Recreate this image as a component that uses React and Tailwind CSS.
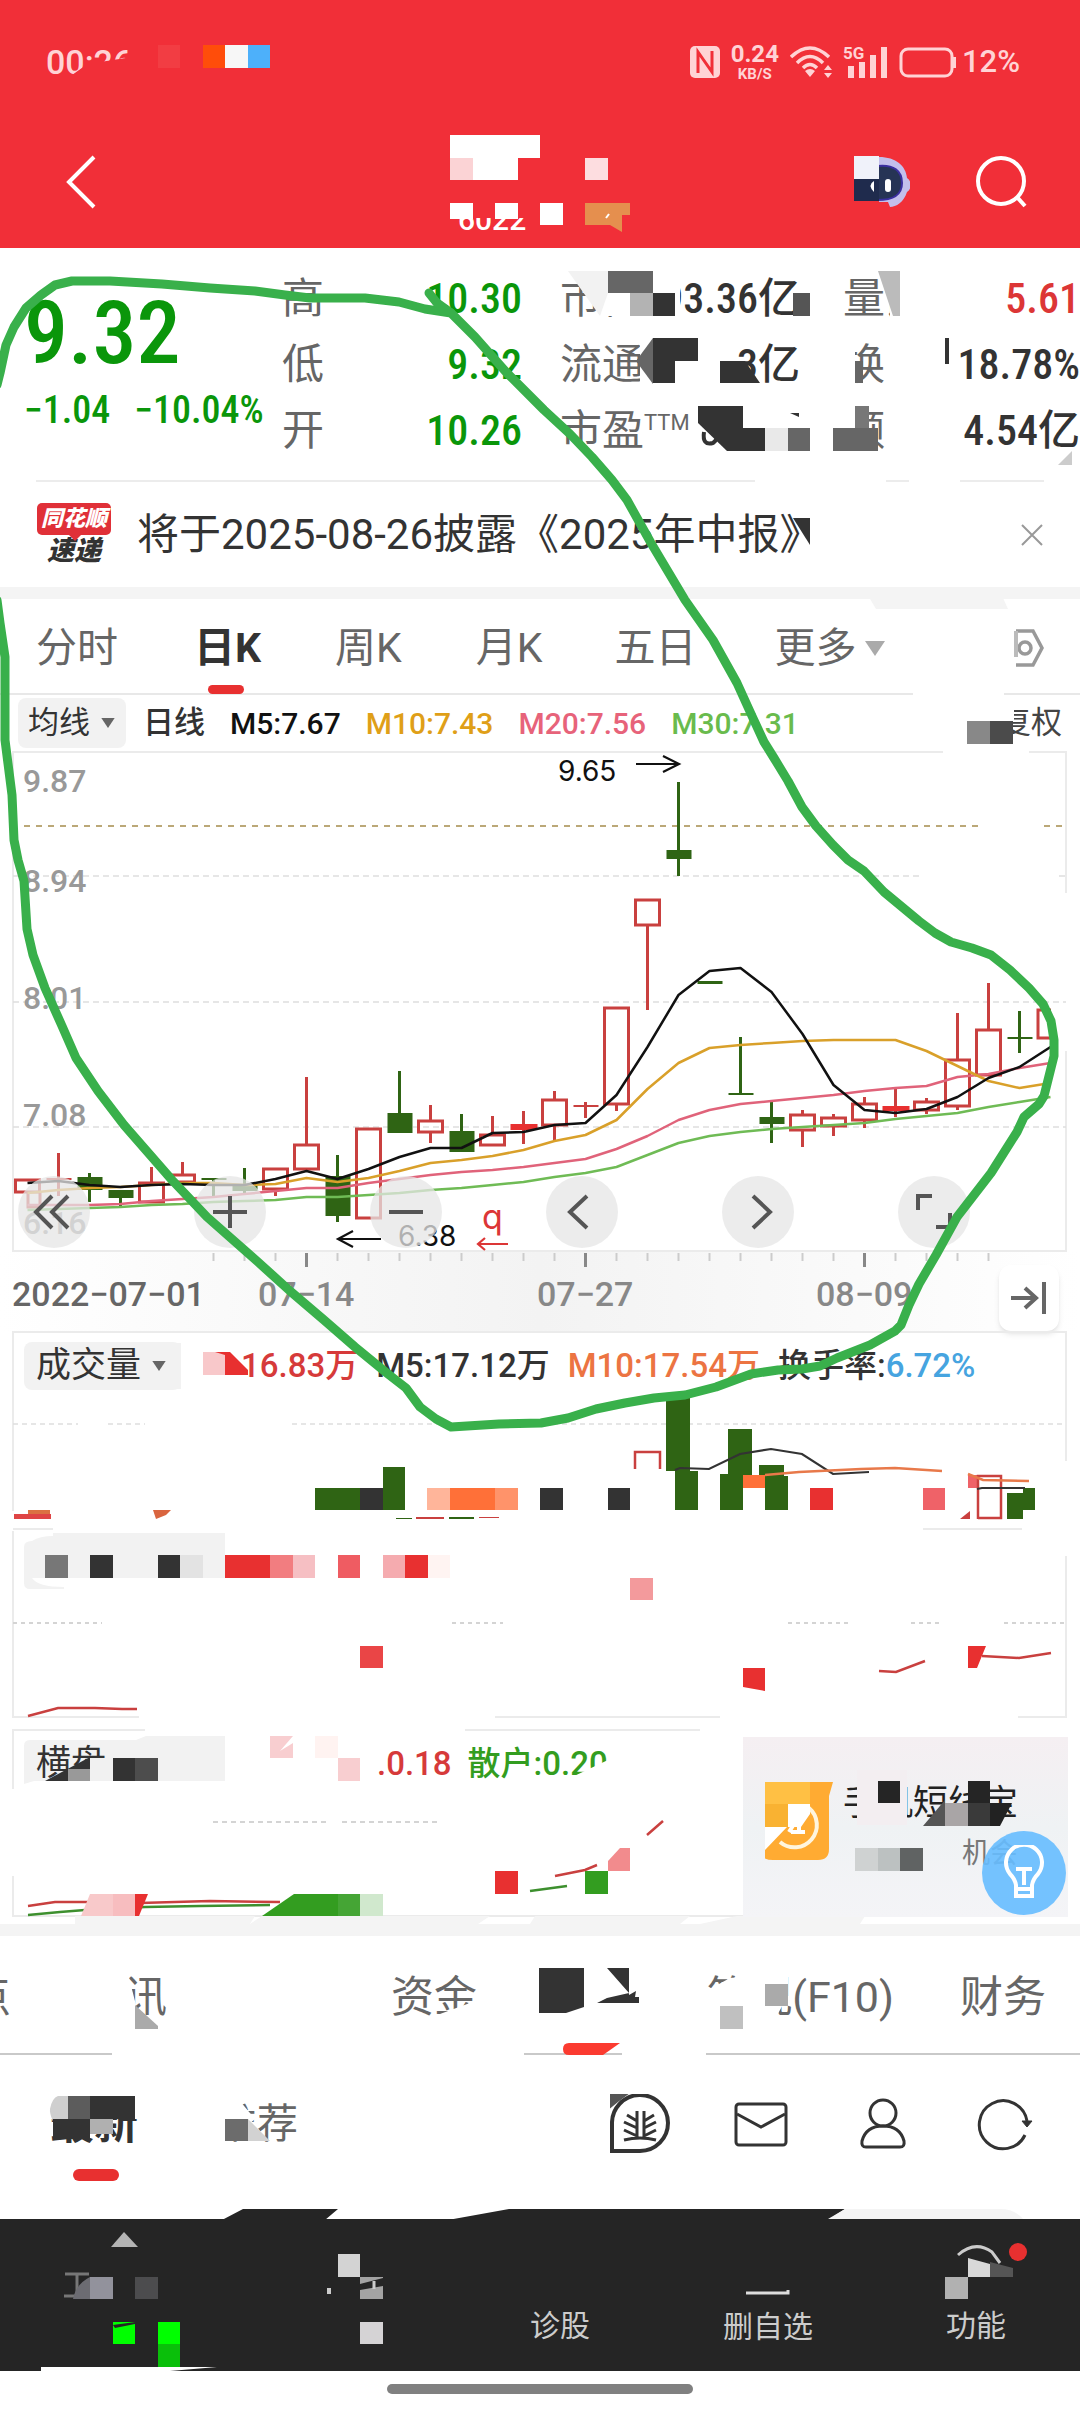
import React from "react";

const INK = "#333333";
const RED = "#e83030";
const CANDLE_RED = "#c9403f";
const CANDLE_GREEN = "#2f6414";

const slotX = (i) => 27.5 + 31 * i;
const plotY = (v) => Math.round(v * 1.074 + 1);

/* [slot, kind, body top, body bottom, wick top, wick bottom] */
const candles = [
  [0, "up", 398, 410, 398, 410],
  [1, "flatUp", 398, 398, 373, 413],
  [2, "down", 396, 408, 392, 419],
  [3, "down", 408, 415, 408, 425],
  [4, "up", 400, 419, 386, 419],
  [5, "up", 393, 400, 382, 400],
  [6, "flatDown", 398, 398, 398, 413],
  [7, "down", 404, 409, 387, 411],
  [8, "up", 387, 407, 387, 413],
  [9, "up", 365, 388, 303, 388],
  [10, "down", 395, 432, 375, 438],
  [11, "up", 350, 434, 350, 434],
  [12, "down", 336, 355, 297, 355],
  [13, "up", 343, 354, 329, 364],
  [14, "down", 353, 372, 337, 372],
  [15, "up", 356, 366, 339, 366],
  [16, "solidUp", 346, 352, 334, 365],
  [17, "up", 323, 347, 316, 362],
  [18, "flatUp", 330, 330, 326, 341],
  [19, "up", 237, 328, 237, 334],
  [20, "up", 137, 161, 137, 240],
  [21, "down", 91, 100, 28, 115],
  [22, "down", 213, 216, 213, 216],
  [23, "flatDown", 318, 318, 265, 318],
  [24, "down", 340, 346, 326, 364],
  [25, "up", 337, 352, 333, 368],
  [26, "up", 340, 348, 337, 358],
  [27, "up", 327, 343, 321, 350],
  [28, "solidUp", 330, 334, 313, 340],
  [29, "up", 325, 333, 322, 337],
  [30, "up", 286, 330, 243, 333],
  [31, "up", 258, 301, 215, 302],
  [32, "flatDown", 266, 266, 241, 280],
];

const averages = [
  { color: "#6fbb55", values: [426, 425.5, 425, 423.5, 422, 420.5, 419, 418, 417, 414, 414, 412.5, 410.5, 408, 406, 403, 400, 396, 392, 386, 375, 364, 358, 354, 351, 349, 347.5, 345, 342, 339, 336, 331, 326, 321] },
  { color: "#e0637a", values: [422, 421.5, 421.5, 421, 418, 416, 414, 412, 409, 406, 406, 401, 398, 394, 391, 389, 386, 383, 379, 370, 358, 343, 333, 328, 325, 322, 319, 316, 313, 311, 303, 300, 294, 290] },
  { color: "#d9a02a", values: [411, 408, 406, 405, 403, 401, 401.5, 403, 402, 397, 400, 397, 390, 383, 380, 376, 371, 362, 357, 343, 314, 290, 275.5, 273, 271, 269, 268, 268, 268, 278, 292, 306, 313, 308] },
  { color: "#111111", values: [401, 399, 403, 405, 403, 402, 403, 403, 398, 390, 398, 388, 377, 369, 369, 355, 354, 347, 345, 319, 275, 226, 204, 201, 223, 263, 310, 333, 336, 332, 321, 304, 293, 275] },
];

function Candle({ data }) {
  const [slot, kind, top, bottom, high, low] = data;
  const x = slotX(slot);
  const t = plotY(top);
  const b = plotY(bottom);
  const h = plotY(high);
  const l = plotY(low);
  const down = kind === "down" || kind === "flatDown";
  const color = down ? CANDLE_GREEN : CANDLE_RED;
  return (
    <g stroke={color} strokeWidth="3" fill="none">
      {h < t && <path d={`M${x} ${h}V${t}`} />}
      {l > b && <path d={`M${x} ${b}V${l}`} />}
      {kind === "up" && <rect x={x - 12} y={t + 1} width="24" height={b - t - 1} />}
      {kind === "down" && <rect x={x - 12} y={t} width="25" height={b - t} fill={color} stroke="none" />}
      {kind === "solidUp" && <rect x={x - 13} y={t} width="27" height={b - t} fill={RED} stroke="none" />}
      {(kind === "flatUp" || kind === "flatDown") && <path d={`M${x - 12} ${t}H${x + 13}`} strokeWidth="2" />}
    </g>
  );
}

function Caret({ className }) {
  return (
    <svg viewBox="0 0 16 12" className={className} aria-hidden="true">
      <path d="M0 0H16L8 12Z" fill="currentColor" />
    </svg>
  );
}

function StatusBar() {
  return (
    <div className="flex h-[124px] items-center justify-between pr-[60px] pl-[46px] text-[#ffd3d5]">
      <span className="text-[34px] font-medium [clip-path:polygon(0_0,100%_0,100%_40%,48%_54%,10%_100%,0_100%)]">00:26</span>
      <div className="flex items-center gap-[11px]">
        <svg viewBox="0 0 30 32" className="h-8 w-[30px]">
          <rect width="30" height="32" rx="5" fill="currentColor" />
          <path d="M8 27V6L22 26V5M8 6V27" fill="none" stroke="#f12f38" strokeWidth="3" />
        </svg>
        <div className="flex flex-col items-center font-bold">
          <span className="text-[24px] leading-[24px]">0.24</span>
          <span className="text-[15px] leading-[16px]">KB/S</span>
        </div>
        <svg viewBox="0 0 42 32" className="h-8 w-[42px]" fill="none" stroke="currentColor" strokeWidth="3.5">
          <path d="M1 11Q20 -7 39 11M7 17Q20 4 33 17M13 22Q20 15 27 22" />
          <path d="M15 25Q20 21 25 25L20 31ZM34 24L38 19L42 24ZM34 27L38 32L42 27Z" fill="currentColor" stroke="none" />
        </svg>
        <div className="relative">
          <svg viewBox="0 0 44 32" className="h-8 w-11" fill="currentColor">
            <path d="M5 20h6v12H5zM16 16h6v16h-6zM27 9h6v23h-6zM38 1h6v31h-6z" />
          </svg>
          <span className="absolute top-0 left-0 text-[17px] leading-[14px] font-bold">5G</span>
        </div>
        <div className="flex items-center gap-1.5">
          <svg viewBox="0 0 58 32" className="h-8 w-[58px]" fill="none" stroke="currentColor" strokeWidth="3">
            <rect x="3" y="3" width="51" height="27" rx="7" />
            <path d="M56 11V22" strokeWidth="4" />
          </svg>
          <span className="text-[31px] font-medium">12%</span>
        </div>
      </div>
    </div>
  );
}

function Header() {
  return (
    <header className="bg-[#f12f38] pb-2 text-white">
      <StatusBar />
      <div className="flex h-[116px] items-center justify-between pr-[52px] pl-[60px]">
        <button type="button" aria-label="返回">
          <svg viewBox="0 0 40 60" className="h-[60px] w-10" fill="none" stroke="white" strokeWidth="4">
            <path d="M34 5L9 30L34 55" />
          </svg>
        </button>
        <div className="flex items-center gap-[66px]">
          <button type="button" aria-label="智能助手">
            <svg viewBox="0 0 56 52" className="h-[52px] w-14">
              <path d="M25 1C42 1 52 10 53 22C58 25 58 33 53 36C50 46 42 51 36 51L34 46H25Z" fill="#c3bfec" />
              <path d="M23 10C40 8 48 15 48 27C48 39 40 44 23 44Z" fill="#263455" stroke="#3b2fa0" strokeWidth="2" />
              <rect width="25" height="23" fill="#f0f2fa" />
              <rect y="23" width="25" height="22" fill="#1f2b4d" />
              <rect x="31" y="23" width="6" height="13" rx="3" fill="white" />
              <path d="M20 25Q13 29 20 36Z" fill="white" />
            </svg>
          </button>
          <button type="button" aria-label="搜索">
            <svg viewBox="0 0 52 52" className="size-[52px]" fill="none" stroke="white" strokeWidth="4">
              <circle cx="25" cy="25" r="23" />
              <path d="M41 41L49 50" />
            </svg>
          </button>
        </div>
      </div>
    </header>
  );
}

function Stats({ className, rows, valueClass }) {
  return (
    <dl className={className}>
      {rows.map(([label, value, color, note]) => (
        <div key={label} className="flex h-[66px] items-center justify-between">
          <dt className="flex text-[42px] leading-[66px] whitespace-nowrap text-[#666]">
            {label}
            {note && <span className="text-[22px] leading-[50px]">{note}</span>}
          </dt>
          <dd className={valueClass + " " + color}>{value}</dd>
        </div>
      ))}
    </dl>
  );
}

function Quote() {
  const value = "text-[42px] leading-[66px] whitespace-nowrap font-medium font-['Liberation_Sans_Narrow','Roboto_Condensed',Roboto,'Noto_Sans_CJK_SC',sans-serif]";
  return (
    <section className="flex pt-[18px] pb-4">
      <div className="w-[282px] pt-[22px] pl-6 font-['Liberation_Sans_Narrow','Roboto_Condensed',Roboto,sans-serif] text-[#0a960a]">
        <p className="text-[88px] leading-[90px] font-medium">9.32</p>
        <p className="flex gap-6 pt-2.5 text-[38px] leading-[44px] font-medium whitespace-nowrap">
          <span>−1.04</span>
          <span>−10.04%</span>
        </p>
      </div>
      <Stats
        className="w-[240px]"
        valueClass={value}
        rows={[
          ["高", "10.30", "text-[#0a960a]"],
          ["低", "9.32", "text-[#0a960a]"],
          ["开", "10.26", "text-[#0a960a]"],
        ]}
      />
      <Stats
        className="ml-[38px] w-[240px]"
        valueClass={value}
        rows={[
          ["市值", "93.36亿", "text-[#333]"],
          ["流通", "93亿", "text-[#333]"],
          ["市盈", "", "text-[#333]", "TTM"],
        ]}
      />
      <Stats
        className="ml-[43px] flex-1"
        valueClass={value}
        rows={[
          ["量比", "5.61", "text-[#dc3636]"],
          ["换", "18.78%", "text-[#333]"],
          ["额", "4.54亿", "text-[#333]"],
        ]}
      />
    </section>
  );
}

function News() {
  return (
    <section className="mx-9 flex h-[107px] items-center border-t-2 border-[#ececec]">
      <div className="flex w-[76px] flex-col items-center italic">
        <span className="relative rounded-[5px] bg-[#e03038] px-1 text-[22px] leading-8 font-black whitespace-nowrap text-white">
          同花顺
          <svg viewBox="0 0 12 6" className="absolute top-full left-8 h-1.5 w-3"><path d="M0 0H12L6 6Z" fill="#e03038" /></svg>
        </span>
        <span className="text-[27px] leading-8 font-black text-[#333]">速递</span>
      </div>
      <a href="#report" className="ml-[25px] flex-1 text-[42px] whitespace-nowrap text-[#333]">将于2025-08-26披露《2025年中报》</a>
      <button type="button" aria-label="关闭">
        <svg viewBox="0 0 24 24" className="size-6" stroke="#999" strokeWidth="2"><path d="M2 2L22 22M22 2L2 22" /></svg>
      </button>
    </section>
  );
}

function PeriodTabs() {
  const tab = "text-[41px] leading-[60px] text-[#666] whitespace-nowrap";
  return (
    <nav className="flex h-24 items-center border-b-2 border-[#e8e8e8] px-9 pt-1">
      <button type="button" className={tab}>分时</button>
      <button type="button" className="relative ml-[76px] text-[41px] leading-[60px] font-bold text-[#333]">
        日K
        <span className="absolute -bottom-4 left-3.5 h-[9px] w-9 rounded-full bg-[#e83030]" />
      </button>
      <button type="button" className={tab + " ml-[74px]"}>周K</button>
      <button type="button" className={tab + " ml-[74px]"}>月K</button>
      <button type="button" className={tab + " ml-[72px]"}>五日</button>
      <button type="button" className={tab + " ml-[78px] flex items-center gap-2"}>
        更多
        <Caret className="h-[15px] w-5 text-[#aaa]" />
      </button>
      <button type="button" aria-label="画线" className="ml-auto">
        <svg viewBox="0 0 30 40" className="h-10 w-[30px]" fill="none" stroke="#999" strokeWidth="3.5">
          <path d="M2 3H19L28 20L19 37H2" />
          <circle cx="11" cy="20" r="6" />
          <path d="M2 3V29" strokeWidth="4" stroke="#bbb" />
        </svg>
      </button>
    </nav>
  );
}

function AverageRow() {
  return (
    <div className="flex h-14 items-center gap-[25px] pr-[18px] pl-[18px] text-[30px] font-medium whitespace-nowrap">
      <button type="button" className="-mr-2 flex h-[50px] items-center gap-2.5 rounded-lg bg-[#f2f2f2] px-2.5 text-[31px] font-normal text-[#333]">
        均线
        <Caret className="h-2.5 w-4 text-[#666]" />
      </button>
      <span className="text-[31px] text-[#333]">日线</span>
      <span className="text-[#111]">M5:7.67</span>
      <span className="text-[#df9f18]">M10:7.43</span>
      <span className="text-[#e7637a]">M20:7.56</span>
      <span className="text-[#69bb4d]">M30:7.31</span>
      <button type="button" className="ml-auto text-[31px] font-normal text-[#444]">复权</button>
    </div>
  );
}

function PriceChart() {
  const button = "flex size-[72px] items-center justify-center rounded-full bg-[#e6e6e6]/75";
  const icon = "size-11 fill-none stroke-[#555] stroke-[4]";
  return (
    <section className="relative">
      <svg viewBox="0 0 1080 501" className="block w-full" fill="none">
        <path d="M1066 142V1H1029M943 1H13V500H1066V300" stroke="#ebebeb" strokeWidth="2" />
        <path d="M13 125H922M1059 125H1066M13 251H1066M13 376H1066" stroke="#dedede" strokeWidth="1.5" strokeDasharray="6 4" />
        <path d="M24 75H979M1044 75H1063" stroke="#bba878" strokeWidth="2" strokeDasharray="6 6" />
        <g fill="#999" fontSize="32" fontWeight="500">
          <text x="23" y="41">9.87</text>
          <text x="23" y="141">8.94</text>
          <text x="23" y="258">8.01</text>
          <text x="23" y="375">7.08</text>
          <text x="23" y="483">6.16</text>
        </g>
        {candles.map((c) => <Candle key={c[0]} data={c} />)}
        <path d="M28 442V456H40M40 440V456M1051 259H1038V287H1058" stroke={CANDLE_RED} strokeWidth="3" />
        {averages.map((line) => (
          <polyline
            key={line.color}
            points={line.values.map((v, i) => `${slotX(i)},${plotY(v)}`).join(" ")}
            stroke={line.color}
            strokeWidth="2.5"
            strokeLinejoin="round"
          />
        ))}
        <g fill="#111" fontSize="28" fontFamily="Inter, sans-serif">
          <text x="558" y="30">9.65</text>
          <text x="398" y="495">6.38</text>
          <text x="482" y="478" fill="#dc3636" fontSize="34">q</text>
        </g>
        <path d="M636 13H679M663 5L679 13L663 21M381 488H338M353 480L338 488L353 496" stroke="#111" strokeWidth="2.2" />
        <path d="M508 493H478M485 487L478 493L485 499" stroke="#dc3636" strokeWidth="2.2" />
      </svg>
      <div className="absolute bottom-1 left-[18px] flex gap-[104px]">
        <button type="button" aria-label="最早" className={button}>
          <svg viewBox="0 0 44 44" className={icon}><path d="M20 6L4 22L20 38M36 6L20 22L36 38" /></svg>
        </button>
        <button type="button" aria-label="放大" className={button}>
          <svg viewBox="0 0 44 44" className={icon}><path d="M5 22H39M22 6V38" /></svg>
        </button>
        <button type="button" aria-label="缩小" className={button}>
          <svg viewBox="0 0 44 44" className={icon}><path d="M5 22H39" /></svg>
        </button>
        <button type="button" aria-label="左移" className={button}>
          <svg viewBox="0 0 44 44" className={icon}><path d="M27 6L10 22L27 38" /></svg>
        </button>
        <button type="button" aria-label="右移" className={button}>
          <svg viewBox="0 0 44 44" className={icon}><path d="M17 6L34 22L17 38" /></svg>
        </button>
        <button type="button" aria-label="全屏" className={button}>
          <svg viewBox="0 0 44 44" className={icon}><path d="M6 20V6H20M38 23V37H24" /></svg>
        </button>
      </div>
    </section>
  );
}

function DateAxis() {
  const minor = [6, 7, 8, 10, 11, 12, 13, 14, 15, 16, 17, 19, 20, 21, 22, 23, 24, 25, 26, 28, 29, 30, 31];
  return (
    <div className="relative h-[79px] bg-linear-to-r from-white via-[#f3f3f3] to-white text-[34px] font-medium">
      <svg viewBox="0 0 1080 16" className="block w-full">
        {minor.map((i) => <path key={i} d={`M${slotX(i)} 1V9`} stroke="#ccc" strokeWidth="2" />)}
        {[9, 18, 27].map((i) => <path key={i} d={`M${slotX(i)} 1V15`} stroke="#888" strokeWidth="3" />)}
      </svg>
      <div className="flex pl-3 leading-[52px] whitespace-nowrap text-[#888]">
        <span className="w-[246px] text-[#666]">2022−07−01</span>
        <span className="w-[279px]">07−14</span>
        <span className="w-[279px]">07−27</span>
        <span>08−09</span>
      </div>
      <button type="button" aria-label="最新" className="absolute right-[21px] bottom-0 flex h-[66px] w-[60px] items-center justify-center rounded-xl bg-white shadow-md">
        <svg viewBox="0 0 38 36" className="h-9 w-[38px]" fill="none" stroke="#666" strokeWidth="4">
          <path d="M1 18H25M15 8L26 18L15 28M34 2V34" />
        </svg>
      </button>
    </div>
  );
}

/* Each block: [x, y, width, height, colour] */
function Blocks({ items }) {
  return items.map(([x, y, w, h, fill]) => <rect key={`${x}-${y}`} x={x} y={y} width={w} height={h} fill={fill} />);
}

function VolumePanel() {
  const g = CANDLE_GREEN;
  return (
    <section className="relative">
      <svg viewBox="0 0 1080 199" className="block w-full" fill="none">
        <path d="M13 180V1H1066V130M13 198H53M923 198H1022" stroke="#ebebeb" strokeWidth="2" />
        <path d="M13 93H78M108 93H145M292 93H1065" stroke="#dedede" strokeWidth="1.5" strokeDasharray="5 4" />
        <path d="M143 12H181V58H155L160 44Z" fill="#f2f2f2" />
        <Blocks
          items={[
            [315, 157, 45, 22, g], [360, 157, 23, 22, INK], [383, 136, 22, 43, g],
            [427, 157, 23, 22, "#ffb59a"], [450, 157, 45, 22, "#ff7038"], [495, 157, 23, 22, "#ff936a"],
            [540, 157, 23, 22, INK], [608, 157, 22, 22, INK],
            [666, 64, 24, 76, g], [675, 140, 23, 39, g],
            [728, 98, 24, 46, g], [720, 143, 23, 36, g],
            [759, 134, 25, 11, g], [765, 145, 23, 34, g],
            [743, 144, 22, 13, "#ff7038"], [810, 157, 23, 22, RED],
            [923, 157, 22, 22, "#ef6268"], [968, 144, 9, 13, "#ef6268"],
            [1007, 162, 16, 26, g], [1023, 157, 12, 22, g],
            [14, 183, 37, 5, "#df4545"], [28, 179, 22, 4, "#db7142"],
            [416, 186, 28, 2, CANDLE_RED], [449, 186, 25, 2, g], [396, 187, 16, 1, g], [479, 186, 20, 1, CANDLE_RED],
          ]}
        />
        <path d="M153 179H171L166 184L156 188Z" fill="#d9653f" />
        <path d="M960 188L970 180V188Z" fill={CANDLE_RED} />
        <path d="M635 138V121H660V138M978 188V145H1001V187H978" stroke={CANDLE_RED} strokeWidth="2.5" />
        <path d="M675 139L680 137L709 138L740 123L771 118L802 123L833 143L869 141M977 158L982 157H1025" stroke={INK} strokeWidth="2.2" />
        <path d="M765 144L799 141L861 138L895 137L942 140M968 143L983 149L1029 150" stroke="#e8794a" strokeWidth="2.5" />
      </svg>
      <div className="absolute inset-x-0 top-2.5 flex h-[50px] items-center text-[33px] font-medium whitespace-nowrap">
        <button type="button" className="ml-6 flex h-12 w-[157px] items-center gap-2.5 rounded-lg bg-[#f2f2f2] pl-3 text-[35px] font-normal text-[#333]">
          成交量
          <Caret className="h-2.5 w-4 text-[#666]" />
        </button>
        <span className="ml-[60px] text-[#d63a3a]">16.83万</span>
        <span className="ml-[18px] text-[#333]">M5:17.12万</span>
        <span className="ml-[18px] text-[#ec7442]">M10:17.54万</span>
        <span className="ml-[18px] text-[#333]">换手率:</span>
        <span className="text-[#46a4e0]">6.72%</span>
      </div>
    </section>
  );
}

function IndicatorPanel() {
  return (
    <section>
      <svg viewBox="0 0 1080 199" className="block w-full" fill="none">
        <path d="M13 1V187H139M495 187H720M1018 187H1066V26" stroke="#ebebeb" strokeWidth="2" />
        <path d="M53 3H225V48H32Q38 57 64 57V59H30Q24 59 24 53V17Q24 11 32 11Q40 6 53 6Z" fill="#f2f2f2" />
        <path d="M13 93H102M452 93H503M788 93H848M911 93H941M1004 93H1065" stroke="#d4d4d4" strokeWidth="2" strokeDasharray="4 4" />
        <Blocks
          items={[
            [45, 25, 23, 23, "#777777"], [90, 25, 23, 23, INK], [158, 25, 22, 23, INK], [180, 25, 23, 23, "#e3e3e3"],
            [225, 25, 45, 23, RED], [270, 25, 23, 23, "#f27d80"], [293, 25, 22, 23, "#f6bfc3"],
            [338, 25, 22, 23, "#ef5c62"], [383, 25, 22, 23, "#f5abaf"], [405, 25, 23, 23, RED], [428, 25, 22, 23, "#fff4f2"],
            [630, 48, 23, 22, "#f39a9c"], [360, 116, 23, 22, "#ea4546"],
          ]}
        />
        <path d="M743 138H765V161L743 157ZM968 116H986L977 138H968Z" fill={RED} />
        <path d="M28 186L58 178H95L122 179H137M879 141L896 142L925 131M982 126L1019 128L1051 123" stroke="#c9403f" strokeWidth="2.5" />
      </svg>
    </section>
  );
}

function RetailPanel() {
  return (
    <section className="relative">
      <svg viewBox="0 0 1080 195" className="block w-full" fill="none">
        <path d="M13 60V1H145M465 1H700M13 147V187H1066" stroke="#ebebeb" strokeWidth="2" />
        <path d="M30 11H136L146 7H225V52H34L24 55V17Q24 11 30 11Z" fill="#f2f2f2" />
        <path d="M213 93H327M342 93H440" stroke="#d4d4d4" strokeWidth="2" strokeDasharray="5 4" />
        <path d="M28 177L55 173H85L140 174L210 172L280 173M555 147L585 141L597 136M647 106L663 92" stroke="#c9403f" strokeWidth="2.5" />
        <path d="M28 186L60 183L85 181L145 178L200 177L270 176M530 162L567 157" stroke="#3d8f2e" strokeWidth="2.5" />
        <Blocks
          items={[
            [270, 7, 23, 22, "#f8ced0"], [315, 7, 23, 22, "#fff3f1"], [338, 29, 22, 23, "#f8ced0"],
            [495, 142, 23, 23, RED], [585, 142, 23, 23, "#339d20"],
            [113, 165, 22, 22, "#f7bdbf"], [338, 165, 22, 22, "#45a535"], [360, 165, 23, 22, "#d0e8cd"],
          ]}
        />
        <path d="M280 22L293 7V14Z" fill="white" />
        <path d="M90 165H113V187H81Z" fill="#f8c9ca" />
        <path d="M135 165H148L139 187H135Z" fill={RED} />
        <path d="M294 165H338V187H262Z" fill="#339d20" />
        <path d="M620 119H630V142H608V132Z" fill="#f28b8d" />
        <path d="M75 195V187H255L250 195ZM262 187H490L478 195H250ZM535 187H690L680 195H530ZM737 187H865L860 195H700Z" fill="#f4f4f4" />
      </svg>
      <div className="absolute inset-x-0 top-2.5 flex h-[50px] items-center text-[33px] font-medium whitespace-nowrap">
        <button type="button" className="ml-6 w-[201px] pl-3 text-left text-[35px] font-normal text-[#333]">横盘</button>
        <span className="ml-[152px] text-[#d63a3a]">.0.18</span>
        <span className="ml-4 text-[#339d20]">散户:0.20</span>
      </div>
      <a href="#tool" className="absolute top-2 right-3 flex h-[180px] w-[325px] bg-linear-to-b from-[#f5eff2] via-[#eff2f4] to-[#f4f4f7] pt-[45px] pl-[22px]">
        <svg viewBox="0 0 68 78" className="h-[78px] w-[68px]">
          <path d="M0 0H68L64 14V67Q64 78 53 78H8Q-2 78 -4 72L0 68Z" fill="#ffab32" />
          <rect width="45" height="22" fill="#ffc044" />
          <path d="M0 22H23V45H0Z" fill="#f9b232" />
          <path d="M44 26A21 21 0 1 1 15 60" fill="none" stroke="#fff5dd" strokeWidth="4" />
          <path d="M23 22H45V32L36 45H23ZM0 45H22L0 68Z" fill="white" />
          <path d="M34 36V50M26 50H40M29 42L24 50" stroke="white" strokeWidth="4" />
        </svg>
        <div className="ml-2.5 whitespace-nowrap text-[#222]">
          <p className="text-[35px] leading-[44px]">手机短线宝</p>
          <p className="pt-2 text-right text-[28px] leading-[40px] text-[#777]">机会</p>
        </div>
      </a>
    </section>
  );
}

function InfoTabs() {
  const tab = "text-[43px] leading-[60px] whitespace-nowrap text-[#666]";
  return (
    <nav className="flex h-[119px] items-center border-b-2 border-[#c9c9c9] pt-1 pr-[34px]">
      <button type="button" className={tab + " -ml-8"}>点</button>
      <button type="button" className={tab + " ml-[70px]"}>资讯</button>
      <button type="button" className={tab + " ml-[224px]"}>资金</button>
      <button type="button" aria-label="公告" className="ml-[62px] h-[60px] w-[100px]">
        <svg viewBox="0 0 100 60" className="block h-[60px] w-[100px]" fill="#333">
          <path d="M0 1H45V40L27 46H0ZM68 1H90V28L97 24L96 30H100V36H58L68 31L90 26Z" />
        </svg>
      </button>
      <button type="button" className={tab + " ml-auto"}>简况(F10)</button>
      <button type="button" className={tab + " ml-[66px]"}>财务</button>
    </nav>
  );
}

function FeedRow() {
  const icon = "h-[60px] w-[60px] fill-none stroke-[#333] stroke-[3]";
  return (
    <div className="flex h-[164px] items-center pr-11 pb-[26px] pl-[50px]">
      <button type="button" className="relative text-[44px] leading-[60px] font-bold whitespace-nowrap text-[#333]">
        最新
        <span className="absolute -bottom-[27px] left-[23px] h-3 w-[46px] rounded-full bg-[#e83030]" />
      </button>
      <button type="button" className="ml-[78px] text-[41px] leading-[60px] whitespace-nowrap text-[#666]">推荐</button>
      <div className="ml-auto flex gap-[62px]">
        <button type="button" aria-label="发帖">
          <svg viewBox="0 0 60 60" className={icon}>
            <path d="M2 57V30A28 28 0 1 1 30 57Z" strokeWidth="4" />
            <path d="M14 46Q30 42 46 46M27 44V17M34 44V17M27 27L17 21M27 34L14 28M27 42L14 36M34 27L44 21M34 34L46 28M34 42L46 36" strokeWidth="3" />
            <path d="M-2 -1H20L8 8L-2 16Z" fill="#555" stroke="none" />
          </svg>
        </button>
        <button type="button" aria-label="消息">
          <svg viewBox="0 0 60 60" className={icon}>
            <rect x="4" y="10" width="50" height="41" rx="3" />
            <path d="M5 20L29 33L53 20" />
          </svg>
        </button>
        <button type="button" aria-label="我的">
          <svg viewBox="0 0 60 60" className={icon}>
            <circle cx="29" cy="19" r="13" />
            <path d="M12 53Q7 53 8 47Q12 32 29 32Q46 32 50 47Q51 53 46 53Z" />
          </svg>
        </button>
        <button type="button" aria-label="刷新">
          <svg viewBox="0 0 60 60" className={icon}>
            <path d="M49 41A24 24 0 1 1 51 27" />
            <path d="M46 27H56L51 33Z" fill="#333" strokeWidth="1" />
          </svg>
        </button>
      </div>
    </div>
  );
}

function ActionBar() {
  const label = "text-[30px] leading-9 text-[#ccc]";
  return (
    <footer className="grid h-[152px] grid-cols-5 bg-[#252525] pl-10">
      <div />
      <div />
      <button type="button" className={label + " pt-[62px]"}>诊股</button>
      <button type="button" className={label + " flex flex-col items-center"}>
        <svg viewBox="0 0 44 6" className="mt-[70px] h-1.5 w-11"><path d="M0 4H42V1" fill="none" stroke="#ddd" strokeWidth="3" /></svg>
        <span className="pt-3.5">删自选</span>
      </button>
      <button type="button" className={label + " relative pt-[62px]"}>
        功能
        <span className="absolute top-6 right-[53px] size-[18px] rounded-full bg-[#e83030]" />
      </button>
    </footer>
  );
}

/* Privacy mosaic laid over the names and figures of the page. */
function Mosaic() {
  return (
    <svg viewBox="0 0 1080 2412" className="pointer-events-none absolute top-0 left-0 w-full" aria-hidden="true">
      <Blocks
        items={[
          [158, 45, 22, 23, "#f23d43"], [203, 45, 22, 23, "#ff4d0a"], [225, 45, 23, 23, "#f7f7f7"], [248, 45, 22, 23, "#4db0fa"],
          [450, 135, 90, 23, "white"], [450, 158, 23, 22, "#fbd3d5"], [473, 158, 45, 22, "white"], [585, 158, 23, 22, "#fddde0"],
          [450, 203, 23, 16, "white"], [495, 203, 23, 16, "white"], [540, 203, 23, 22, "white"],
        ]}
      />
      <text x="458" y="230" fontSize="30" fontWeight="500" fill="white" className="[clip-path:inset(16px_0_0_0)]">6022</text>
      <path d="M585 203H630V215H622V232L610 225H585Z" fill="#e58f4e" />
      <path d="M606 218L609 214" stroke="white" strokeWidth="2" />

      <path d="M588 270H664V316H604Z" fill="white" />
      <path d="M568 271H608V293L600 316Z" fill="#f2f2f2" />
      <Blocks
        items={[
          [608, 271, 45, 22, "#666666"], [630, 293, 23, 23, "#b3b3b3"], [653, 293, 22, 23, INK], [793, 293, 17, 23, "#555555"],
          [640, 338, 96, 46, "white"], [653, 338, 45, 23, INK], [653, 361, 22, 22, INK],
          [843, 338, 12, 50, "white"], [855, 361, 8, 22, "#666666"], [890, 268, 50, 52, "white"],
          [743, 428, 22, 23, INK], [765, 428, 23, 23, "#e9e9e9"], [788, 428, 22, 23, "#666666"],
          [833, 406, 22, 50, "white"], [855, 406, 14, 22, "#777777"], [833, 428, 45, 23, "#666666"], [945, 338, 4, 26, INK],
          [967, 721, 23, 23, "#888888"], [990, 721, 23, 23, "#4b4b4b"], [997, 705, 17, 16, "white"],
          [203, 1352, 22, 23, "#f8c8ca"],
        ]}
      />
      <path d="M653 293L665 271H680V316H675V293Z" fill="white" />
      <path d="M704 432Q702 446 713 443Q716 441 718 436" fill="none" stroke={INK} strokeWidth="4" />
      <path d="M653 338V384L636 361Z" fill="#666" />
      <path d="M720 361H745L760 383H720Z" fill={INK} />
      <path d="M878 271H900V316H893Z" fill="#bbbbbb" />
      <path d="M698 406H743V451H727L698 423Z" fill={INK} />
      <path d="M790 413H799V417Z" fill={INK} />
      <path d="M1072 451V465H1058Z" fill="#ccc" />
      <path d="M793 518H810V545Z" fill={INK} />
      <path d="M810 510H834V570H810ZM755 478H886V484H755ZM909 478H960V484H909Z" fill="white" />
      <path d="M863 587H998L1008 609H876Z" fill="#f4f4f4" />
      <path d="M913 692H1004V698H913Z" fill="white" />
      <path d="M215 1352H230L248 1370V1375H225V1355Z" fill={RED} />

      <path d="M66 1781L90 1758V1781ZM90 1758H150V1781H90Z" fill="#f1f1f1" />
      <path d="M45 1781L90 1757V1781Z" fill={INK} />
      <Blocks
        items={[
          [68, 1769, 22, 12, "#999999"], [113, 1758, 22, 23, INK], [135, 1758, 23, 23, "#4d4d4d"],
          [857, 1770, 50, 55, "#f3eef1"], [878, 1781, 22, 22, "#252525"], [968, 1781, 22, 22, "#252525"],
          [945, 1803, 23, 23, "#a9a5a6"], [968, 1803, 22, 23, "#3a3a3a"],
          [855, 1848, 23, 23, "#cfd2d2"], [878, 1848, 22, 23, "#bcc1c1"], [900, 1848, 23, 23, "#606363"],
        ]}
      />
      <path d="M923 1826L945 1800V1826Z" fill="#555" />
      <path d="M990 1803H1012L1000 1826H990Z" fill="#222" />
      <path d="M570 1778L608 1760V1785H570Z" fill="white" />

      <path d="M54 1970H127L136 2005V2035H54Z" fill="white" />
      <path d="M135 2005L158 2026V2029H135Z" fill="#aaa" />
      <path d="M440 2014L478 2000V2025H440Z" fill="white" />
      <path d="M697 1996L730 1978L788 1972V1995L772 2025H697Z" fill="white" />
      <Blocks items={[[765, 1984, 23, 22, "#aaaaaa"], [720, 2006, 23, 23, "#c0c0c0"], [112, 2052, 412, 6, "white"], [622, 2052, 84, 6, "white"]]} />
      <path d="M569 2043H620L603 2055H569Q563 2055 563 2049Q563 2043 569 2043Z" fill="#fb3b30" />

      <path d="M48 2094H138V2119H48Z" fill="white" />
      <path d="M58 2096H68V2119H90V2135H60Q49 2116 50 2109Q52 2098 58 2096Z" fill="#cfcfcf" />
      <Blocks items={[[68, 2096, 22, 23, "#5c5c5c"], [90, 2096, 45, 23, INK], [53, 2119, 37, 20, INK], [90, 2119, 23, 15, "#b0b0b0"]]} />
      <path d="M214 2094H234L255 2119L225 2145H214Z" fill="white" />
      <Blocks items={[[225, 2119, 23, 22, "#6c6c6c"]]} />
      <path d="M248 2119L270 2141H248Z" fill="#d2d2d2" />

      <path d="M222 2220L243 2209H338L325 2220ZM448 2220L509 2209H845L828 2220Z" fill="#252525" />
      <path d="M845 2209H1000Q1015 2209 1023 2219H828Z" fill="#f4f4f4" />
      <path d="M124 2232L138 2247H111Z" fill="#b4b4b4" />
      <path d="M65 2274H89M77 2274V2296M64 2296H75" stroke="#777" strokeWidth="3" fill="none" />
      <path d="M90 2277V2299H73Q76 2284 90 2277Z" fill="#6c6c72" />
      <Blocks
        items={[
          [90, 2277, 23, 22, "#92929c"], [135, 2277, 23, 22, "#4c4c4e"],
          [113, 2322, 22, 22, "#00ff00"], [158, 2322, 22, 22, "#00ff00"], [158, 2344, 22, 23, "#0abf0a"],
          [338, 2254, 22, 23, "#d3d3d3"], [360, 2277, 23, 22, "#a3a3a3"], [327, 2288, 4, 6, "#cccccc"], [360, 2322, 23, 22, "#d5d3d5"],
          [945, 2277, 23, 22, "#b1b1b1"],
        ]}
      />
      <path d="M968 2258L990 2264V2277H968Z" fill="#d8d8d8" />
      <path d="M360 2284L383 2278V2286L360 2290Z" fill="#252525" />
      <path d="M374 2281V2289" stroke="#ccc" strokeWidth="3" />
      <path d="M113 2325L135 2322V2324L115 2328Z" fill="#252525" />
      <path d="M990 2262L1013 2268V2277H990Z" fill="#555" />
      <path d="M958 2255Q975 2240 992 2252L1000 2263" stroke="#ccc" strokeWidth="3" fill="none" />
      <path d="M41 2367H217L170 2371H41Z" fill="white" />
    </svg>
  );
}

function PenMark() {
  return (
    <svg viewBox="0 0 1080 2412" className="pointer-events-none absolute top-0 left-0 w-full" fill="none" stroke="#39b04b" strokeWidth="9" strokeLinecap="round" strokeLinejoin="round" aria-hidden="true">
      <path d="M-3 385L0 373L6 345L14 327L26 308L41 295L55 285L72 281L110 281L162 284L210 288L255 291L285 295L310 298L365 298L399 302L425 309L451 313L475 337L506 372L544 410L570 434L592 457L612 480L627 500L651 543L685 600L713 640L737 683L752 716L764 742L774 758L788 781L802 807L816 826L833 845L848 860L864 871L884 892L919 921L935 933L951 942L972 948L991 955L1010 970L1029 988L1043 1004L1051 1021L1054 1040L1054 1056L1048 1080L1044 1096L1039 1104L1024 1117L1017 1132L991 1173L957 1217L936 1255L919 1284L909 1305L901 1325L895 1331L870 1345L837 1358L820 1366L802 1369L778 1370L751 1374L716 1387L685 1395L654 1398L625 1403L596 1409L568 1418L541 1423L499 1424L451 1427L436 1419L420 1407L406 1388L388 1374L355 1347L324 1320L290 1291L258 1262L207 1217L172 1180L124 1125L98 1091L76 1058L62 1026L45 988L33 955L27 929L24 881L18 860L14 840L12 795L5 740L5 657L0 623L-3 600" />
      <path d="M429 293L437 303L451 313" />
    </svg>
  );
}

export default function App() {
  return (
    <main className="relative min-h-screen overflow-hidden bg-white font-[Roboto,'Noto_Sans_CJK_SC',sans-serif]">
      <Header />
      <Quote />
      <News />
      <div className="h-3 bg-[#f4f4f4]" />
      <PeriodTabs />
      <AverageRow />
      <PriceChart />
      <DateAxis />
      <VolumePanel />
      <IndicatorPanel />
      <RetailPanel />
      <div className="h-3 bg-[#f4f4f4]" />
      <InfoTabs />
      <FeedRow />
      <ActionBar />
      <div className="flex justify-center pt-[13px] pb-[18px]">
        <div className="h-2.5 w-[306px] rounded-full bg-[#808080]" />
      </div>
      <Mosaic />
      <button type="button" aria-label="提示" className="absolute top-[1831px] right-3.5 flex size-[84px] items-center justify-center rounded-full bg-[#66bdff]/90">
        <svg viewBox="0 0 44 56" className="h-14 w-11" fill="none" stroke="white" strokeWidth="4">
          <path d="M14 40Q13 34 8 29A18 18 0 1 1 36 29Q31 34 30 40V51H14ZM14 44H30M22 40V25M14 24H30" />
        </svg>
      </button>
      <PenMark />
    </main>
  );
}
